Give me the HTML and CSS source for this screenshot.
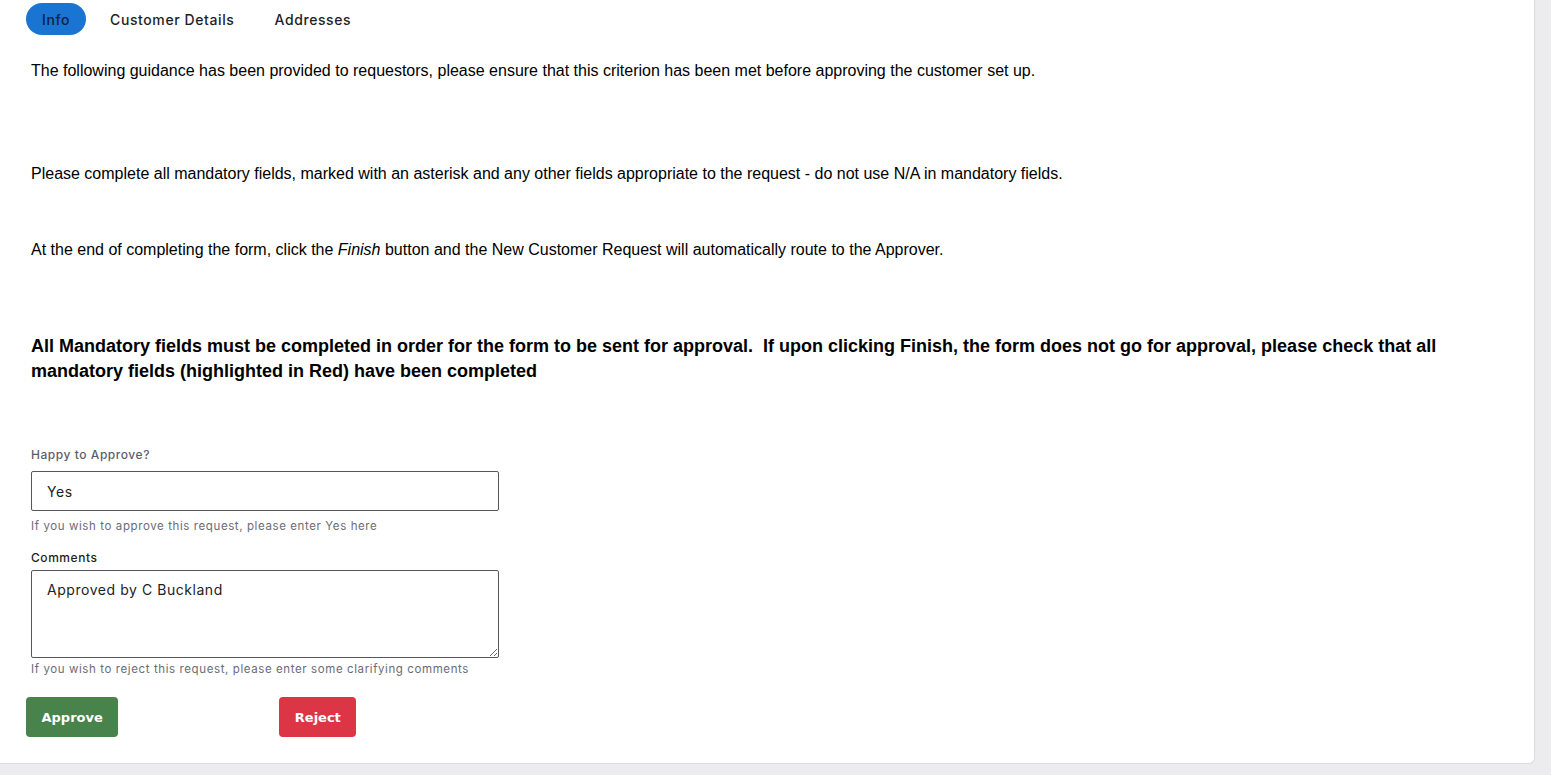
FILE: index.html
```html
<!DOCTYPE html>
<html lang="en">
<head>
  <meta charset="UTF-8">
  <title>New Customer Request | Approval</title>
  <link rel="stylesheet" href="styles.css">
</head>
<body>
  <div class="card">
    <div class="tabs">
      <button class="tab active">Info</button>
      <button class="tab">Customer Details</button>
      <button class="tab">Addresses</button>
    </div>

    <div class="guidance">
      <p class="p-first">The following guidance has been provided to requestors, please ensure that this criterion has been met before approving the customer set up.</p>
      <p class="p-second">Please complete all mandatory fields, marked with an asterisk and any other fields appropriate to the request - do not use N/A in mandatory fields.</p>
      <p class="p-third">At the end of completing the form, click the <em>Finish</em> button and the New Customer Request will automatically route to the Approver.</p>
      <p class="p-bold">All Mandatory fields must be completed in order for the form to be sent for approval.&nbsp; If upon clicking Finish, the form does not go for approval, please check that all mandatory fields (highlighted in Red) have been completed</p>
    </div>

    <div class="form">
      <label class="field-label muted" for="approve">Happy to Approve?</label>
      <input id="approve" class="field-input" type="text" value="Yes">
      <div class="help">If you wish to approve this request, please enter Yes here</div>

      <label class="field-label tight" for="comments">Comments</label>
      <textarea id="comments" class="field-input field-area">Approved by C Buckland</textarea>
      <div class="help help-last">If you wish to reject this request, please enter some clarifying comments</div>

      <div class="actions">
        <button class="btn btn-approve">Approve</button>
        <button class="btn btn-reject">Reject</button>
      </div>
    </div>
  </div>
</body>
</html>
```

FILE: styles.css
```css
body {
  margin: 0;
  background-color: #ececef;
  font-family: "Liberation Sans", Arial, sans-serif;
  color: #000;
}

.card {
  width: 1535px;
  height: 764px;
  box-sizing: border-box;
  background-color: #fff;
  border-right: 1px solid #dcdce0;
  border-bottom: 1px solid #dcdce0;
  border-bottom-right-radius: 6px;
  padding: 3px 0 0 26px;
}

.tabs {
  display: flex;
  align-items: center;
}

.tab {
  font-family: Inter, sans-serif;
  font-size: 14px;
  font-weight: 500;
  letter-spacing: 0.6px;
  color: #1e1e24;
  background: none;
  border: none;
  height: 32px;
  padding: 0 16px;
  border-radius: 16px;
  margin-right: 8px;
  cursor: pointer;
}

.tab.active {
  background-color: #1a75d2;
  color: #10223a;
}

.guidance {
  padding-left: 5px;
}

.guidance p {
  margin: 0;
  font-size: 16px;
  line-height: 20px;
}

.p-first {
  padding-top: 26px;
}

.p-second {
  padding-top: 83px;
}

.p-third {
  padding-top: 56px;
}

.guidance .p-bold {
  padding-top: 74px;
  font-weight: bold;
  font-size: 18px;
  line-height: 25px;
  max-width: 1440px;
}

.form {
  padding-left: 5px;
  padding-top: 64px;
  font-family: Inter, sans-serif;
}

.field-label {
  display: block;
  font-size: 12px;
  line-height: 14px;
  font-weight: 500;
  letter-spacing: 0.55px;
  color: #1e1e24;
  margin-bottom: 9px;
}

.field-label.tight {
  margin-bottom: 5px;
}

.field-label.muted {
  color: #5c5f6b;
}

.field-input {
  display: block;
  width: 468px;
  height: 40px;
  box-sizing: border-box;
  border: 1px solid #55575f;
  border-radius: 2px;
  padding: 0 15px;
  font-family: Inter, sans-serif;
  font-size: 14px;
  letter-spacing: 0.55px;
  color: #222;
}

.field-area {
  height: 88px;
  padding-top: 10px;
  resize: vertical;
}

.help {
  font-size: 11.5px;
  line-height: 14px;
  letter-spacing: 0.6px;
  color: #6b6b78;
  margin-top: 8px;
  margin-bottom: 18px;
}

.help.help-last {
  margin-top: 4px;
  margin-bottom: 21px;
}

.actions {
  display: flex;
  gap: 161px;
  margin-left: -5px;
}

.btn {
  font-family: "DejaVu Sans", sans-serif;
  font-size: 13px;
  font-weight: bold;
  color: #fff;
  border: none;
  border-radius: 4px;
  height: 40px;
  padding: 0 15.5px;
  cursor: pointer;
}

.btn-approve {
  background-color: #47834a;
}

.btn-reject {
  background-color: #dc3545;
}
```
